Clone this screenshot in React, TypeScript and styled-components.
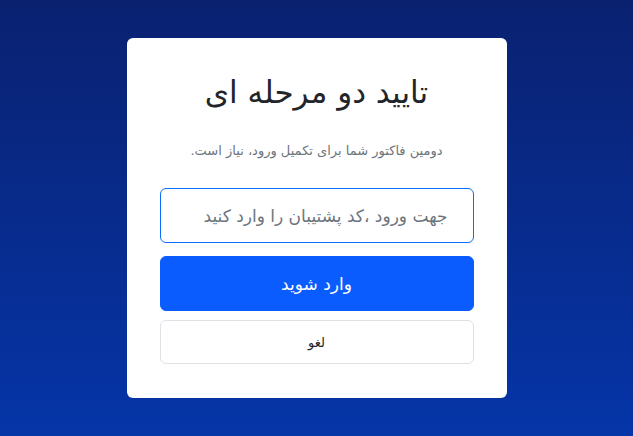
import React from "react";
import styled, { createGlobalStyle } from "styled-components";

const GlobalStyle = createGlobalStyle`
  html, body {
    margin: 0;
    padding: 0;
    height: 100%;
  }
  body {
    font-family: "DejaVu Sans", "Noto Sans", sans-serif;
  }
  #root {
    height: 100%;
  }
`;

const Page = styled.div`
  height: 100vh;
  display: flex;
  align-items: center;
  justify-content: center;
  background: linear-gradient(180deg, #0a2170 0%, #0535a8 100%);
  direction: rtl;
`;

const Card = styled.div`
  width: 380px;
  box-sizing: border-box;
  background: #fff;
  border-radius: 6px;
  padding: 31px 33px 34px;
  display: flex;
  flex-direction: column;
  align-items: stretch;
`;

const Title = styled.h2`
  margin: 3px 0 0;
  font-size: 31px;
  font-weight: 400;
  color: #212529;
  text-align: center;
  line-height: 1.3;
`;

const Subtitle = styled.p`
  margin: 31px 0 30px;
  font-size: 13px;
  color: #6c757d;
  text-align: center;
`;

const CodeInput = styled.input`
  box-sizing: border-box;
  height: 55px;
  width: 100%;
  border: 1px solid #0d6efd;
  border-radius: 6px;
  padding: 0 25px 0 16px;
  font-family: inherit;
  font-size: 17px;
  direction: rtl;
  outline: none;
  color: #212529;
  &::placeholder {
    color: #6c757d;
  }
`;

const Button = styled.button<{ $primary?: boolean }>`
  box-sizing: border-box;
  width: 100%;
  height: ${({ $primary }) => ($primary ? "55px" : "44px")};
  margin-top: ${({ $primary }) => ($primary ? "13px" : "9px")};
  border-radius: 6px;
  font-family: inherit;
  font-size: ${({ $primary }) => ($primary ? "17px" : "13px")};
  cursor: pointer;
  background: ${({ $primary }) => ($primary ? "#0b5cff" : "#fff")};
  color: ${({ $primary }) => ($primary ? "#fff" : "#212529")};
  border: 1px solid ${({ $primary }) => ($primary ? "#0b5cff" : "#dee2e6")};
`;

export default function App() {
  return (
    <>
      <GlobalStyle />
      <Page>
        <Card>
          <Title>تایید دو مرحله ای</Title>
          <Subtitle>دومین فاکتور شما برای تکمیل ورود، نیاز است.</Subtitle>
          <CodeInput placeholder="جهت ورود ،کد پشتیبان را وارد کنید" />
          <Button $primary>وارد شوید</Button>
          <Button>لغو</Button>
        </Card>
      </Page>
    </>
  );
}
